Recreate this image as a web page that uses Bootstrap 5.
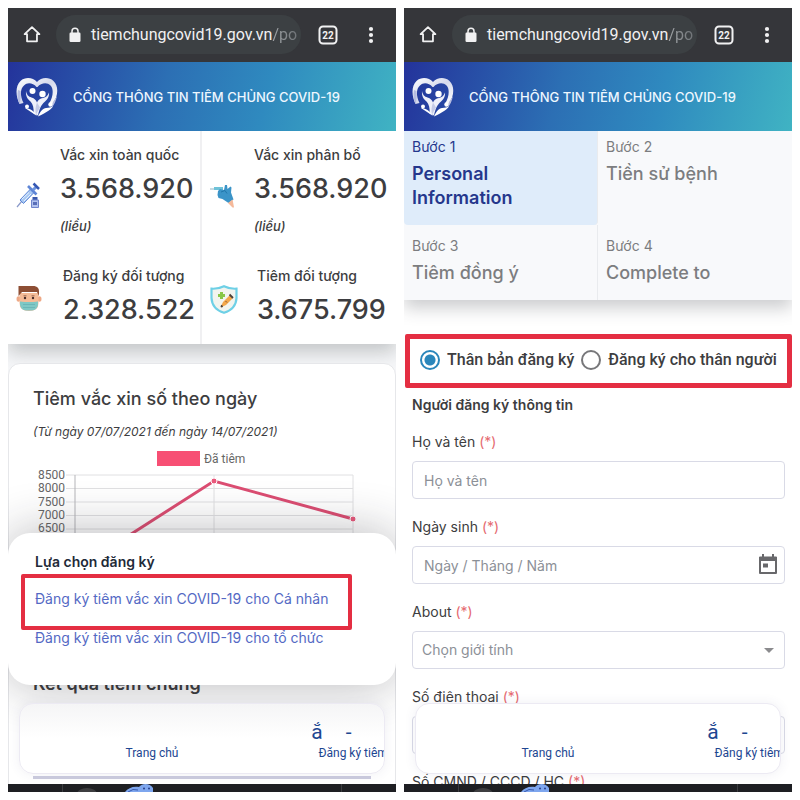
<!DOCTYPE html>
<html lang="vi">
<head>
<meta charset="utf-8">
<meta name="viewport" content="width=device-width, initial-scale=1">
<title>Cổng thông tin tiêm chủng COVID-19</title>
<link href="https://cdn.jsdelivr.net/npm/bootstrap@5.3.0/dist/css/bootstrap.min.css" rel="stylesheet">
<style>
  body { font-family: Inter, "Liberation Sans", sans-serif; color: #3d3d40; background: #fff; font-size: 14px; line-height: 20px; }
  .roboto { font-family: Roboto, "Liberation Sans", sans-serif; }
  .phone { min-width: 0; background: #fff; }
  .chrome-bar { background: #35363a; color: #f1f1f2; padding: 7px 25px 8px 15px; min-height: 54px; }
  .url-pill { background: #3c4043; border-radius: 20px; height: 39px; font-size: 16px; padding: 0 4px 0 13px; margin-left: 15px; margin-right: 17px; }
  .url-text { white-space: nowrap; margin-left: 10px; }
  .url-fade { background: linear-gradient(90deg, #a4a7aa, #6f7377); -webkit-background-clip: text; background-clip: text; color: transparent; }
  .bar-btn { background: none; border: 0; padding: 0; color: inherit; display: flex; }
  .bar-menu { padding-left: 30px; }
  .portal-head { background: linear-gradient(105deg, #24339b 0%, #2c6fb4 40%, #2f8abf 66%, #40b3c3 100%); color: #eef7ff; padding: 0 8px; min-height: 69px; gap: 15px; font-size: 13px; font-weight: 500; }
  .page-area { min-height: 0; overflow: hidden; }
  .sys-bar { background: #1e1f23; height: 8px; }

  .stats { box-shadow: 0 8px 18px rgba(60,70,70,.28); background: #fff; font-weight: 500; }
  .stat { display: grid; grid-template-columns: 28px 1fr; column-gap: 16px; padding: 14px 0 0 8px; }
  .stat.second { padding-top: 10px; column-gap: 19px; }
  .stats > :nth-child(odd) .stat { border-right: 2px solid #f0f0f2; }
  .stat-num { font-size: 27px; line-height: 34px; margin-top: 7px; }
  .stat-unit { font-size: 13px; font-style: italic; margin-top: 10px; padding-bottom: 20px; }
  .stat-icon { align-self: start; margin-top: 37px; }
  .stat.second .stat-icon { margin-top: 19px; }
  .stat.second .stat-num { padding-bottom: 17px; }

  .left-page { background: #f6f7f9; }
  .chart-card { background: #fff; border: 1px solid #e6e7ea; border-radius: 12px; margin-top: 19px; padding: 23px 24px 0; }
  .big-title { font-size: 18px; line-height: 24px; font-weight: 500; margin: 0; }
  .range-note { font-size: 12px; font-style: italic; margin: 11px 0 6px; }
  .result-title { margin-top: 24px; padding-bottom: 120px; font-weight: 600; }
  .sheet { left: 0; right: 0; bottom: 107px; z-index: 2; background: #fff; border-radius: 22px; padding: 19px 27px 36px; box-shadow: 0 0 50px rgba(30,30,40,.32); }
  .sheet h2 { font-size: 14px; line-height: 20px; font-weight: 600; color: #222a38; margin: 0 0 16px; }
  .sheet-links { gap: 17px; }
  .sheet a { color: #5469c4; text-decoration: none; font-size: 14px; line-height: 22px; }
  .marked { position: relative; }
  .marked::after { content: ""; position: absolute; inset: -14px -24px -20px -14px; border: 4px solid #e42e42; border-radius: 2px; pointer-events: none; }
  .dock { left: 11px; right: 11px; bottom: 18px; z-index: 3; border: 1px solid #eceaf3; border-radius: 14px; background: #fff; overflow: hidden; color: #1d4691; font-size: 12px; padding: 16px 0 12px; box-shadow: 0 0 12px rgba(60,60,120,.08); }
  .dock.veiled { background: linear-gradient(#f5f5f6, #fff 50%); }
  .dock a { color: inherit; text-decoration: none; line-height: 16px; white-space: nowrap; }
  .dock-glyph { font-size: 21px; line-height: 24px; gap: 23px; }
  .dock-row { display: grid; grid-template-columns: 29% 53% 18%; margin-top: 1px; }
  .dock-mark { grid-template-columns: 80% 20%; margin-top: 0; }
  .track { left: 25px; right: 25px; bottom: 13px; height: 3px; background: #ccccdf; z-index: 1; }

  .steps { background: #f8f9fb; box-shadow: 0 8px 16px rgba(50,55,65,.25); color: #7c7d80; }
  .step { padding: 6px 8px 0; min-height: 94px; height: 100%; }
  .step.low { min-height: 75px; padding-top: 11px; }
  .steps > :nth-child(odd) .step { border-right: 1px solid #e9ebee; }
  .step.now { background: #dfecfa; color: #25378c; border-radius: 0 0 4px 4px; }
  .step-name { font-size: 18px; line-height: 24px; font-weight: 500; margin-top: 5px; }
  .step.now .step-name { font-weight: 600; }
  .choices { border: 5px solid #e42e42; border-radius: 2px; margin: 34px 0 0 1px; padding: 11px 10px 13px; gap: 7px; font-size: 16px; font-weight: 500; white-space: nowrap; }
  .choices input { width: 20px; height: 20px; appearance: none; border: 2px solid #77777a; border-radius: 50%; background: #fff; margin: 0; flex: none; }
  .choices input:checked { border-color: #2a86bb; background: radial-gradient(circle, #2a86bb 0 5px, #fff 6px); }
  .signup { padding: 7px 7px 0 8px; }
  .signup h2 { font-size: 14px; line-height: 20px; font-weight: 600; margin: 0 0 15px; }
  .field { margin-bottom: 16px; }
  .field label { display: block; line-height: 24px; margin-bottom: 7px; }
  .field label span { color: #e5696f; }
  .box-input { border: 1px solid #d9dae6; border-radius: 4px; height: 38px; width: 100%; padding: 0 11px; background: #fff; font-size: 14px; color: #8c9097; appearance: none; outline: 0; }
  .box-input::placeholder { color: #8c9097; opacity: 1; }
  select.box-input { padding: 0 9px; }
  .trail { right: 8px; top: 8px; }
</style>
<script src="https://cdn.jsdelivr.net/npm/bootstrap@5.3.0/dist/js/bootstrap.bundle.min.js"></script>
</head>
<body>
<svg width="0" height="0" class="position-absolute" aria-hidden="true">
  <defs>
    <linearGradient id="silver" x1="0" y1="0" x2="1" y2="1"><stop offset="0" stop-color="#fff"/><stop offset=".5" stop-color="#d5d9ec"/><stop offset="1" stop-color="#fff"/></linearGradient>
    <symbol id="home" viewBox="0 0 20 20"><path d="M10 1.8 1.8 9.6h2.7v8h11v-8h2.7z" fill="none" stroke="currentColor" stroke-width="2" stroke-linejoin="round"/></symbol>
    <symbol id="lock" viewBox="0 0 12 15"><path d="M3 6V4.300a3 3 0 0 1 6 0V6" fill="none" stroke="currentColor" stroke-width="1.500"/><rect x=".5" y="5.500" width="11" height="9.500" rx="1.200" fill="currentColor"/></symbol>
    <symbol id="tabs" viewBox="0 0 20 20"><rect x="1.500" y="1.500" width="17" height="17" rx="3.500" fill="none" stroke="currentColor" stroke-width="2"/><text x="10" y="13.600" font-family="Roboto, sans-serif" font-size="10" font-weight="700" text-anchor="middle" fill="currentColor">22</text></symbol>
    <symbol id="dots" viewBox="0 0 6 18"><circle cx="3" cy="3" r="2.100" fill="currentColor"/><circle cx="3" cy="9" r="2.100" fill="currentColor"/><circle cx="3" cy="15" r="2.100" fill="currentColor"/></symbol>
    <symbol id="logo" viewBox="0 0 42 40">
      <path d="M3.500 27C-.5 19-.8 9 4.500 4 9.500-.5 17 .5 21 5c4-4.500 11.500-5.500 16.500-1 5.300 5 5 15-1 23l-3-1C37 20 38 12 34.500 8.500 31 5 25 6 21.500 10h-1C17 6 11.500 5 8 8.500 4 12 4 19 7.500 26z" fill="url(#silver)"/>
      <path d="M3.500 27c1-3 1.500-7 1-13L2 13c-1 5-.5 10 1.500 14zM36 30c2-2 4-6 5-11l-4 6z" fill="#b6bce0"/>
      <circle cx="16.500" cy="14" r="3" fill="#fff"/><circle cx="26.500" cy="17" r="3.200" fill="#fff"/>
      <path d="M10 14c.8 4 2.500 5.500 5.500 6.500s4.500 2.500 5.500 5c1-2.500 3-4 6-4.500s5-2.500 6-5.500c.5 4-1.500 7-4.500 9.500s-5 6.500-6.500 13.500l-4.500-2C18 31 17 27 14.500 24.500 11.500 22 9.500 19 10 14z" fill="#eef0fa"/>
      <path d="M21 25.500c-1.500 4-2 8-1 12l4-7z" fill="#c5cbe6"/>
      <circle cx="11" cy="29.500" r="2" fill="#fff"/><circle cx="34.500" cy="27.500" r="2.200" fill="#fff"/>
      <path d="M22 39.500c2-5 5-8 8-8.500 3-.2 5-.5 7-2-1 3-6 6-15 10.500zM21 39 9 31c4 0 8 2 12 8z" fill="#fff"/>
    </symbol>
    <symbol id="deco" viewBox="0 0 388 8"><path d="M54 0h1v8h-1zM333 0h1v8h-1z" fill="#3b3c40"/><ellipse cx="79" cy="10" rx="10" ry="6" fill="#3d3d40"/><path d="M117 8c3-4 8-6 14-5 3-4 11-4 14 1v4z" fill="#7ea6ee"/><circle cx="136" cy="4.500" r="1" fill="#263f8a"/><circle cx="141" cy="4.500" r="1" fill="#263f8a"/><path d="M120 8q5-4 10-2" stroke="#3658ae" fill="none"/></symbol>
  </defs>
</svg>

<main class="d-flex vh-100 p-2 gap-2 overflow-hidden">
  <section class="phone d-flex flex-column flex-fill w-50 position-relative overflow-hidden" aria-label="Trang chủ">
    <div class="chrome-bar roboto d-flex align-items-center flex-shrink-0">
      <button class="bar-btn" aria-label="Trang chính"><svg width="18" height="19"><use href="#home"/></svg></button>
      <div class="url-pill d-flex align-items-center flex-fill">
        <svg class="flex-shrink-0" width="12" height="15"><use href="#lock"/></svg>
        <div class="url-text">tiemchungcovid19.gov.vn<span class="url-fade">/po</span></div>
      </div>
      <button class="bar-btn" aria-label="Thẻ"><svg width="20" height="20"><use href="#tabs"/></svg></button>
      <button class="bar-btn bar-menu" aria-label="Menu"><svg width="6" height="18"><use href="#dots"/></svg></button>
    </div>
    <header class="portal-head d-flex align-items-center flex-shrink-0">
      <svg class="flex-shrink-0" width="42" height="40"><use href="#logo"/></svg>
      <div class="text-nowrap">CỔNG THÔNG TIN TIÊM CHỦNG COVID-19</div>
    </header>
    <div class="page-area left-page flex-fill">
      <div class="stats row g-0">
        <div class="col-6"><div class="stat">
          <svg class="stat-icon" width="25" height="26" viewBox="0 0 25 26"><path d="M1 25 6 19" stroke="#8a99c9" stroke-width="1.200"/><path d="m4 18 3.500 3.500L18 10.500 14.500 7z" fill="#a9c9f3" stroke="#5c86d6" stroke-width="1"/><path d="m6 17 7-6.500M8 19l7-7" stroke="#e6f1ff"/><path d="m12 4 8.500 8.500" stroke="#5f86d6" stroke-width="2.600"/><path d="m17 8 4-4" stroke="#6f95dd" stroke-width="3"/><path d="m17.500 1.500 5.500 5.500" stroke="#3558b4" stroke-width="2.500"/><rect x="16.500" y="15" width="5" height="3" fill="#3858ad"/><path d="M15.500 18h7v7.500h-7z" fill="#b2c2ee" stroke="#7085cc"/><path d="M17 20h4v3h-4z" fill="#586eb8"/></svg>
          <div><div>Vắc xin toàn quốc</div><div class="stat-num">3.568.920</div><div class="stat-unit">(liều)</div></div>
        </div></div>
        <div class="col-6"><div class="stat">
          <svg class="stat-icon" width="26" height="26" viewBox="0 0 26 26"><path d="M0 7h9" stroke="#8fb4c4"/><path d="M4 5h9v3H4z" fill="#6fc2d8"/><path d="m8 9 2-2 4 1 1-5h2l.5 4 3-2.500 1 1-.5 5 2.500 7-5 3.500-6-4-4-1-1-3z" fill="#3b94c8"/><path d="m11 10 4-1.500 2 3" fill="none" stroke="#2177ab"/><path d="m18 21 4.500-3.500 1.500 8-1.500 0z" fill="#f5b99a"/></svg>
          <div><div>Vắc xin phân bổ</div><div class="stat-num">3.568.920</div><div class="stat-unit">(liều)</div></div>
        </div></div>
        <div class="col-6"><div class="stat second">
          <svg class="stat-icon" width="26" height="27" viewBox="0 0 26 27"><ellipse cx="2.500" cy="14" rx="2" ry="2.800" fill="#eea987"/><ellipse cx="23.500" cy="14" rx="2" ry="2.800" fill="#eea987"/><path d="M3.500 8h19v10q0 8-9.500 8t-9.500-8z" fill="#f5bc98"/><path d="M2.500 11V1h16q4.500 1 4.500 5v5l-2-4H6z" fill="#8d4e34"/><path d="M7.500 10.800h3m5 0h3" stroke="#9e6b54" stroke-width="1"/><circle cx="9" cy="13" r="1.200" fill="#482e2a"/><circle cx="17" cy="13" r="1.200" fill="#482e2a"/><path d="M4 16.500q9 1 18 0v3.500q-1 5-6 5.500h-6q-5-.5-6-5.500z" fill="#7ec8c5"/><path d="M7 19.500h12M7 22.500h12" stroke="#6bb6b7"/></svg>
          <div><div>Đăng ký đối tượng</div><div class="stat-num">2.328.522</div></div>
        </div></div>
        <div class="col-6"><div class="stat second">
          <svg class="stat-icon" width="28" height="29" viewBox="0 0 28 29"><path d="M14 1.200q-6 3-12.500 2.500V13Q2 24 14 27.800 26 24 26.500 13V3.700Q20 4.200 14 1.200z" fill="#f2f4ee" stroke="#6ed0e6" stroke-width="2.200"/><path d="M11.500 7v7M8 10.500h7" stroke="#88c746" stroke-width="3"/><path d="m10.500 22.500 2.500-5.500 6.500-6.500 3 3-6.500 6.500z" fill="#f3a74a"/><path d="m19.500 9.500 3.500 3.500M11 20.500l1.500 1.500" stroke="#4b4038" stroke-width="1.800"/><path d="m15.500 16 1.500 1.500" stroke="#85562f"/></svg>
          <div><div>Tiêm đối tượng</div><div class="stat-num">3.675.799</div></div>
        </div></div>
      </div>
      <div class="chart-card">
        <h1 class="big-title">Tiêm vắc xin số theo ngày</h1>
        <p class="range-note">(Từ ngày 07/07/2021 đến ngày 14/07/2021)</p>
        <svg class="d-block w-100 roboto" viewBox="0 0 338 200" font-size="12" fill="#666" role="img" aria-label="Biểu đồ số mũi đã tiêm">
          <rect x="124" y="3" width="43" height="15" fill="#f74f74"/>
          <text x="171" y="15">Đã tiêm</text>
          <g stroke="#e0e0e2" stroke-width="1"><path d="M33 27h287M33 40.500h287M33 54h287M33 67.500h287M33 81h287M33 94.500h287M33 108h287M181 27v130M320 27v130"/></g>
          <path d="M42 27v130" stroke="#b5b5b9" stroke-width="1"/>
          <g text-anchor="end"><text x="32" y="31">8500</text><text x="32" y="44">8000</text><text x="32" y="58">7500</text><text x="32" y="71">7000</text><text x="32" y="84">6500</text><text x="32" y="98">6000</text></g>
          <path d="M42 122 181 33 320 71" fill="none" stroke="#dc4d72" stroke-width="3"/>
          <g fill="#e95a7d" stroke="#fff"><circle cx="181" cy="33" r="3"/><circle cx="320" cy="71" r="3"/></g>
        </svg>
        <h2 class="big-title result-title">Kết quả tiêm chủng</h2>
      </div>
    </div>
    <div class="sheet position-absolute">
      <h2>Lựa chọn đăng ký</h2>
      <div class="sheet-links d-flex flex-column align-items-start">
        <a class="marked" href="#canhan">Đăng ký tiêm vắc xin COVID-19 cho Cá nhân</a>
        <a href="#tochuc">Đăng ký tiêm vắc xin COVID-19 cho tổ chức</a>
      </div>
    </div>
    <div class="track position-absolute"></div>
    <nav class="dock veiled roboto position-absolute">
      <div class="dock-row dock-mark"><span></span><span class="dock-glyph d-flex"><span>ắ</span><span>-</span></span></div>
      <div class="dock-row"><span></span><a href="#home-page">Trang chủ</a><a href="#dangky">Đăng ký tiêm</a></div>
    </nav>
    <div class="sys-bar flex-shrink-0"><svg class="d-block w-100" height="8"><use href="#deco"/></svg></div>
  </section>

  <section class="phone d-flex flex-column flex-fill w-50 position-relative overflow-hidden" aria-label="Đăng ký">
    <div class="chrome-bar roboto d-flex align-items-center flex-shrink-0">
      <button class="bar-btn" aria-label="Trang chính"><svg width="18" height="19"><use href="#home"/></svg></button>
      <div class="url-pill d-flex align-items-center flex-fill">
        <svg class="flex-shrink-0" width="12" height="15"><use href="#lock"/></svg>
        <div class="url-text">tiemchungcovid19.gov.vn<span class="url-fade">/po</span></div>
      </div>
      <button class="bar-btn" aria-label="Thẻ"><svg width="20" height="20"><use href="#tabs"/></svg></button>
      <button class="bar-btn bar-menu" aria-label="Menu"><svg width="6" height="18"><use href="#dots"/></svg></button>
    </div>
    <header class="portal-head d-flex align-items-center flex-shrink-0">
      <svg class="flex-shrink-0" width="42" height="40"><use href="#logo"/></svg>
      <div class="text-nowrap">CỔNG THÔNG TIN TIÊM CHỦNG COVID-19</div>
    </header>
    <div class="page-area flex-fill">
      <div class="steps row g-0">
        <div class="col-6"><div class="step now"><div>Bước 1</div><div class="step-name">Personal<br>Information</div></div></div>
        <div class="col-6"><div class="step"><div>Bước 2</div><div class="step-name">Tiền sử bệnh</div></div></div>
        <div class="col-6"><div class="step low"><div>Bước 3</div><div class="step-name">Tiêm đồng ý</div></div></div>
        <div class="col-6"><div class="step low"><div>Bước 4</div><div class="step-name">Complete to</div></div></div>
      </div>
      <div class="choices roboto d-flex align-items-center">
        <input type="radio" name="who" id="self" checked><label for="self">Thân bản đăng ký</label>
        <input type="radio" name="who" id="other"><label for="other">Đăng ký cho thân người</label>
      </div>
      <form class="signup">
        <h2>Người đăng ký thông tin</h2>
        <div class="field"><label for="name">Họ và tên <span>(*)</span></label><input class="box-input" id="name" type="text" placeholder="Họ và tên"></div>
        <div class="field"><label for="dob">Ngày sinh <span>(*)</span></label>
          <div class="position-relative"><input class="box-input" id="dob" type="text" placeholder="Ngày / Tháng / Năm">
            <button type="button" class="bar-btn trail position-absolute" aria-label="Chọn ngày"><svg width="18" height="21" viewBox="0 0 18 21"><path d="M1 3.500h16V19H1z" fill="none" stroke="#68686b" stroke-width="2" stroke-linejoin="round"/><path d="M0 3h18v4H0zM3 0h2v4H3zM13 0h2v4h-2zM4 9.500h5v4H4z" fill="#68686b"/></svg></button></div></div>
        <div class="field"><label for="sex">About <span>(*)</span></label>
          <div class="position-relative"><select class="box-input" id="sex"><option>Chọn giới tính</option></select>
            <svg class="trail position-absolute pe-none" width="16" height="22" viewBox="0 0 16 22"><path d="M3 9h10l-5 5z" fill="#8b8b8e"/></svg></div></div>
        <div class="field"><label for="tel">Số điện thoại <span>(*)</span></label><input class="box-input" id="tel" type="tel"></div>
        <div class="field"><label for="cmnd">Số CMND / CCCD / HC <span>(*)</span></label><input class="box-input" id="cmnd" type="text"></div>
      </form>
    </div>
    <nav class="dock roboto position-absolute">
      <div class="dock-row dock-mark"><span></span><span class="dock-glyph d-flex"><span>ắ</span><span>-</span></span></div>
      <div class="dock-row"><span></span><a href="#home-page">Trang chủ</a><a href="#dangky">Đăng ký tiêm</a></div>
    </nav>
    <div class="sys-bar flex-shrink-0"><svg class="d-block w-100" height="8"><use href="#deco"/></svg></div>
  </section>
</main>
</body>
</html>
